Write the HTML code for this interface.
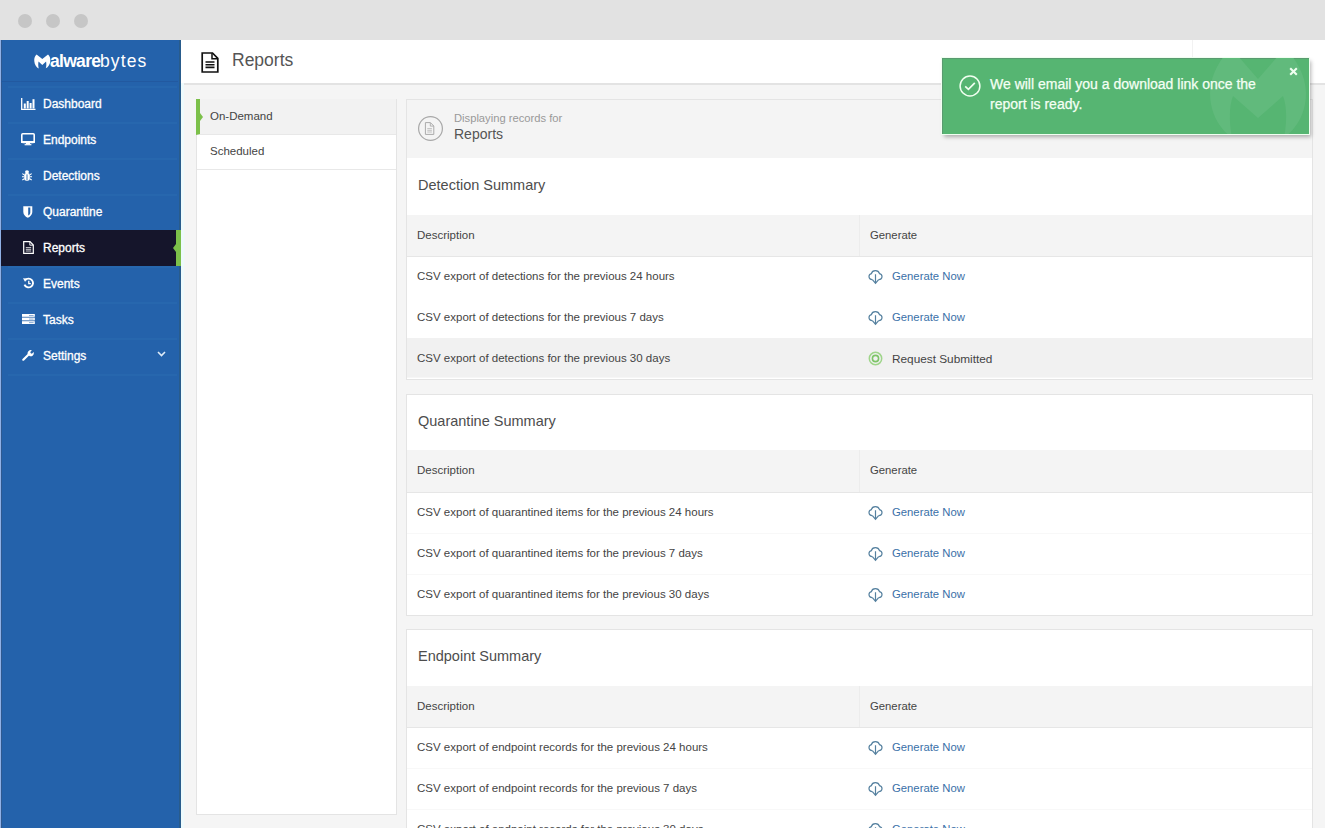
<!DOCTYPE html>
<html><head><meta charset="utf-8">
<style>
*{box-sizing:border-box;margin:0;padding:0}
html,body{width:1325px;height:828px;overflow:hidden;background:#f5f5f5;font-family:"Liberation Sans",sans-serif}
.titlebar{position:absolute;left:0;top:0;width:1325px;height:40px;background:#e2e2e2}
.dot{position:absolute;top:14px;width:14px;height:14px;border-radius:50%;background:#c6c6c6}
.sidebar{position:absolute;left:0;top:40px;width:181px;height:788px;background:#2462ab;border-left:1px solid #90b0e6;box-shadow:inset 1px 0 0 #30598f,inset -2px 0 0 #295c8c}
.logo{position:absolute;left:33px;top:11px;color:#fff;font-size:16px;height:20px;white-space:nowrap}
.mlogo{position:absolute;left:0;top:3px}
.lb{position:absolute;left:16px;top:0;font-weight:bold;font-size:17.5px;letter-spacing:-0.7px}
.lr{position:absolute;left:66px;top:0;font-size:17.5px;letter-spacing:1.1px}
.nav{position:absolute;left:0;top:0;width:180px;height:36px;color:#fff;font-size:12px}
.nav .sep{position:absolute;left:7px;right:4px;top:0;height:2px;background:#2767ae}
.nav .t{position:absolute;left:42px;top:11px;-webkit-text-stroke:0.3px #fff}
.nav .ic{position:absolute;line-height:0}
.nav.active{background:#15152b}
.nav.active::after{content:"";position:absolute;right:0;top:0;width:5px;height:36px;background:#7cc04a}
.nav.active::before{content:"";position:absolute;right:5px;top:14px;border-right:3px solid #7cc04a;border-top:4px solid transparent;border-bottom:4px solid transparent}
.chev{position:absolute;left:156px;top:13px}
.main{position:absolute;left:181px;top:40px;width:1144px;height:788px;background:#f5f5f5}
.hdr{position:absolute;left:0;top:0;width:1144px;height:45px;background:#fff;border-bottom:2px solid #e3e3e3}
.hdr .t{position:absolute;left:51px;top:10px;font-size:17.5px;color:#555}
.hic{position:absolute;left:20px;top:12px;line-height:0}
.hsep{position:absolute;left:1011px;top:0;width:1px;height:43px;background:#f2f2f2}
.subnav{position:absolute;left:196px;top:99px;width:201px;height:716px;background:#fff;border:1px solid #e4e4e4}
.sitem{position:absolute;left:0;width:199px;height:35px;font-size:11.5px;color:#444;border-bottom:1px solid #e8e8e8}
.sitem.act{background:#f2f2f2;border-left:4px solid #7cc04a;left:-1px;top:-1px !important;height:36px;width:200px}
.sitem.act::before{content:"";position:absolute;left:0;top:14px;border-left:3px solid #7cc04a;border-top:4px solid transparent;border-bottom:4px solid transparent}
.sitem .t{position:absolute;left:13px;top:10px}
.sitem.act .t{left:10px;top:11px}
.panel{position:absolute;left:406px;width:907px;background:#fff;border:1px solid #e4e4e4}
.phead{position:absolute;left:0;top:0;width:905px;height:58px;background:#f4f4f4}
.circ{position:absolute;left:11px;top:16px;line-height:0}
.dr{position:absolute;left:47px;top:12px;font-size:11.2px;color:#999}
.rp{position:absolute;left:47px;top:26px;font-size:14px;color:#555}
.ptitle{position:absolute;left:11px;font-size:14.5px;color:#4d4d4d}
.thead{position:absolute;left:0;width:905px;height:42px;background:#f4f4f4;border-bottom:1px solid #e6e6e6}
.hd{position:absolute;left:10px;top:14px;font-size:11.5px;color:#444}
.hg{position:absolute;left:463px;top:14px;font-size:11.3px;color:#444}
.vdiv{position:absolute;left:452px;top:0;width:1px;height:41px;background:#ececec}
.row{position:absolute;left:0;width:905px;height:41px;font-size:11.5px;color:#444}
.row.hov{background:#f1f1f1}
.row .d{position:absolute;left:10px;top:13px}
.row .g{position:absolute;left:485px;top:13px;color:#3a70a8;font-size:11.3px}
.row .g.sub{color:#444;font-size:11.8px}
.row .ic{position:absolute;left:461px;top:13px;line-height:0}
.toast{position:absolute;left:942px;top:58px;width:367px;height:76px;background:#56b572;box-shadow:inset 1px 1px 0 #5a9a70,0 0 0 1px #effff0,2px 3px 4px rgba(0,0,0,.3)}
.wm{position:absolute;left:0;top:0}
.chk{position:absolute;left:17px;top:17px}
.tt{position:absolute;left:48px;top:16px;font-size:14px;line-height:20px;color:#f4fff4;-webkit-text-stroke:0.25px #f4fff4}
.x{position:absolute;left:347px;top:9px}
.row.hov{height:40px;border-bottom:1px solid #f6f6f6}
.row.hov .d,.row.hov .g{top:14px}
.row.hov .ic{top:13px}
.nav.active .sep{display:none}
.lstrip{position:absolute;left:181px;top:83px;width:3px;height:745px;background:#eefafc}
.row.sepb{border-bottom:1px solid #f8f8f8}

</style></head><body>
<div class="titlebar">
  <div class="dot" style="left:18px"></div>
  <div class="dot" style="left:46px"></div>
  <div class="dot" style="left:74px"></div>
</div>
<div class="sidebar">
<div class="logo"><svg class="mlogo" width="17" height="15" viewBox="0 0 17 15"><path d="M2.6 0.6C0.9 1.8 0 4.3 0.3 7.2C0.6 10.6 2.4 13.2 4.8 14.6C4.2 12.6 4.1 10.2 4.5 7.6L8.3 11L12.1 7.6C12.5 10.2 12.4 12.6 11.8 14.2C14.2 13 16 10.6 16.3 7.2C16.6 4.3 15.7 1.8 14 0.6L8.3 5Z" fill="#fff"/></svg><span class="lb">alware</span><span class="lr">bytes</span></div>
<div style="position:absolute;left:0;top:41px;width:177px;height:1px;background:#2259a0"></div>
<div class="nav" style="top:46px"><div class="sep"></div><div class="ic" style="left:20px;top:12px"><svg width="15" height="12" viewBox="0 0 15 12"><path d="M0.7 0V11.3H14.5" fill="none" stroke="#fff" stroke-width="1.3"/><rect x="2.8" y="5.5" width="2" height="5" fill="#fff"/><rect x="5.7" y="3" width="2" height="7.5" fill="#fff"/><rect x="8.6" y="5" width="2" height="5.5" fill="#fff"/><rect x="11.5" y="1.2" width="2" height="9.3" fill="#fff"/></svg></div><div class="t">Dashboard</div></div>
<div class="nav" style="top:82px"><div class="sep"></div><div class="ic" style="left:20px;top:11px"><svg width="14" height="13" viewBox="0 0 14 13"><rect x="0.8" y="0.8" width="12.4" height="8.6" rx="1" fill="none" stroke="#fff" stroke-width="1.6"/><rect x="0" y="8" width="14" height="1.9" fill="#fff"/><rect x="5" y="9.8" width="4" height="1.4" fill="#fff"/><rect x="3.6" y="11.1" width="6.8" height="1.2" fill="#fff"/></svg></div><div class="t">Endpoints</div></div>
<div class="nav" style="top:118px"><div class="sep"></div><div class="ic" style="left:21px;top:11.5px"><svg width="10" height="11" viewBox="0 0 10 11"><ellipse cx="5" cy="1.8" rx="2" ry="1.5" fill="#fff"/><rect x="2.2" y="3.1" width="5.6" height="7.6" rx="2.2" fill="#fff"/><path d="M0.2 3.6L2.2 4.8M9.8 3.6L7.8 4.8M0 6.8H2.2M10 6.8H7.8M0.3 10L2.3 8.8M9.7 10L7.7 8.8" stroke="#fff" stroke-width="1.1"/><path d="M5 4.4v5.6" stroke="#2462ab" stroke-width="0.9"/></svg></div><div class="t">Detections</div></div>
<div class="nav" style="top:154px"><div class="sep"></div><div class="ic" style="left:21.5px;top:11.5px"><svg width="10" height="12" viewBox="0 0 10 12"><path d="M0.3 0.3H9.3V6C9.3 8.9 7 10.8 4.8 11.8C2.6 10.8 0.3 8.9 0.3 6Z" fill="#fff"/><path d="M5.2 1.6H7.3V6.4C7.3 7.6 6.6 8.6 5.2 9.6Z" fill="#2462ab"/></svg></div><div class="t">Quarantine</div></div>
<div class="nav active" style="top:190px"><div class="sep"></div><div class="ic" style="left:22px;top:11px"><svg width="11" height="13" viewBox="0 0 11 13"><path d="M0.7 0.7H7L10.3 4V12.3H0.7Z" fill="none" stroke="#fff" stroke-width="1.2"/><path d="M6.8 0.8V4.2H10.2" fill="none" stroke="#fff" stroke-width="0.9"/><path d="M2.8 6.6H8.2M2.8 8.3H8.2M2.8 10H8.2" stroke="#fff" stroke-width="0.8"/></svg></div><div class="t">Reports</div></div>
<div class="nav" style="top:226px"><div class="sep"></div><div class="ic" style="left:21.5px;top:11px"><svg width="11" height="12" viewBox="0 0 11 12"><path d="M2.1 3.3A4.4 4.4 0 1 1 1.5 7.6" fill="none" stroke="#fff" stroke-width="1.9"/><path d="M0 1.3L3.7 1.5L2.1 4.9Z" fill="#fff"/><path d="M5.8 3.8V6.6H7.8" fill="none" stroke="#fff" stroke-width="1.3"/></svg></div><div class="t">Events</div></div>
<div class="nav" style="top:262px"><div class="sep"></div><div class="ic" style="left:21px;top:11.5px"><svg width="13" height="11" viewBox="0 0 13 11"><rect x="0" y="0" width="12.8" height="2.8" fill="#fff"/><rect x="0" y="3.6" width="12.8" height="2.8" fill="#fff"/><rect x="0" y="7.2" width="12.8" height="2.8" fill="#fff"/><rect x="7" y="1" width="4.6" height="0.9" fill="#7fa3d0"/><rect x="7" y="4.6" width="4.6" height="0.9" fill="#7fa3d0"/><rect x="7" y="8.2" width="4.6" height="0.9" fill="#7fa3d0"/></svg></div><div class="t">Tasks</div></div>
<div class="nav" style="top:298px"><div class="sep"></div><div class="ic" style="left:21px;top:12px"><svg width="12" height="11" viewBox="0 0 12 11"><path d="M1.3 9.7L6.6 4.5" stroke="#fff" stroke-width="2.2" stroke-linecap="round"/><path d="M5.7 4.1A3.1 3.1 0 0 1 9.9 0.4L8.2 2.1L8.8 3.2L9.9 3.8L11.6 2.1A3.1 3.1 0 0 1 7.5 6Z" fill="#fff"/></svg></div><div class="t">Settings</div><svg class="chev" width="9" height="6" viewBox="0 0 9 6"><path d="M1 1L4.5 4.5L8 1" fill="none" stroke="#e0ecf8" stroke-width="1.6"/></svg></div>
<div class="nav" style="top:334px;height:2px"><div class="sep"></div></div>
</div>
<div class="main"><div class="hdr"><div class="hic"><svg width="18" height="21" viewBox="0 0 18 21"><path d="M1.2 1H11.5L16.8 6.3V20H1.2Z" fill="none" stroke="#111" stroke-width="1.7"/><path d="M11 1.2V6.8H16.6" fill="none" stroke="#111" stroke-width="1.5"/><path d="M4.5 10H13.5M4.5 12.7H13.5M4.5 15.4H13.5" stroke="#111" stroke-width="1.6"/></svg></div><div class="t">Reports</div><div class="hsep"></div></div></div>
<div class="lstrip"></div>
<div class="subnav">
  <div class="sitem act" style="top:0"><div class="t">On-Demand</div></div>
  <div class="sitem" style="top:35px"><div class="t">Scheduled</div></div>
</div>
<div class="panel" style="top:99px;height:281px"><div class="phead"><div class="circ"><svg width="26" height="26" viewBox="0 0 26 26"><circle cx="12.5" cy="12.5" r="11.9" fill="none" stroke="#a8a8a8" stroke-width="1.2"/><path d="M7.4 6.6H12.4L15.8 10V18.4H7.4Z" fill="none" stroke="#aaa" stroke-width="1"/><path d="M12.3 6.7V10.1H15.7" fill="none" stroke="#aaa" stroke-width="0.9"/><path d="M9.3 12.6H13.9M9.3 14.3H13.9M9.3 16H13.9" stroke="#bbb" stroke-width="0.9"/></svg></div><div class="dr">Displaying records for</div><div class="rp">Reports</div></div><div class="ptitle" style="top:77px">Detection Summary</div><div class="thead" style="top:115px"><div class="hd">Description</div><div class="vdiv"></div><div class="hg">Generate</div></div><div class="row" style="top:157px"><div class="d">CSV export of detections for the previous 24 hours</div><div class="ic"><svg width="15" height="15" viewBox="0 0 15 15"><path d="M4.4 9.6C2.5 9.6 1 8.3 1 6.6C1 5.1 2 4 3.4 3.7C3.8 1.9 5.5 0.7 7.4 0.7C9.3 0.7 11 1.9 11.5 3.7C12.9 4 14 5.1 14 6.6C14 8.3 12.5 9.6 10.6 9.6" fill="none" stroke="#55809f" stroke-width="1.2"/><path d="M4.4 9.6L7.5 13.4L10.6 9.6M7.5 4.2V13.2" fill="none" stroke="#55809f" stroke-width="1.2"/></svg></div><div class="g">Generate Now</div></div><div class="row" style="top:198px"><div class="d">CSV export of detections for the previous 7 days</div><div class="ic"><svg width="15" height="15" viewBox="0 0 15 15"><path d="M4.4 9.6C2.5 9.6 1 8.3 1 6.6C1 5.1 2 4 3.4 3.7C3.8 1.9 5.5 0.7 7.4 0.7C9.3 0.7 11 1.9 11.5 3.7C12.9 4 14 5.1 14 6.6C14 8.3 12.5 9.6 10.6 9.6" fill="none" stroke="#55809f" stroke-width="1.2"/><path d="M4.4 9.6L7.5 13.4L10.6 9.6M7.5 4.2V13.2" fill="none" stroke="#55809f" stroke-width="1.2"/></svg></div><div class="g">Generate Now</div></div><div class="row hov" style="top:238px"><div class="d">CSV export of detections for the previous 30 days</div><div class="ic"><svg width="15" height="15" viewBox="0 0 15 15"><circle cx="7.5" cy="7.5" r="6.2" fill="none" stroke="#9fd58a" stroke-width="1.5"/><circle cx="7.5" cy="7.5" r="3.1" fill="none" stroke="#7cc466" stroke-width="1.6"/></svg></div><div class="g sub">Request Submitted</div></div></div>
<div class="panel" style="top:394px;height:222px"><div class="ptitle" style="top:18px">Quarantine Summary</div><div class="thead" style="top:55px;height:43px"><div class="hd">Description</div><div class="vdiv" style="height:42px"></div><div class="hg">Generate</div></div><div class="row sepb" style="top:98px"><div class="d">CSV export of quarantined items for the previous 24 hours</div><div class="ic"><svg width="15" height="15" viewBox="0 0 15 15"><path d="M4.4 9.6C2.5 9.6 1 8.3 1 6.6C1 5.1 2 4 3.4 3.7C3.8 1.9 5.5 0.7 7.4 0.7C9.3 0.7 11 1.9 11.5 3.7C12.9 4 14 5.1 14 6.6C14 8.3 12.5 9.6 10.6 9.6" fill="none" stroke="#55809f" stroke-width="1.2"/><path d="M4.4 9.6L7.5 13.4L10.6 9.6M7.5 4.2V13.2" fill="none" stroke="#55809f" stroke-width="1.2"/></svg></div><div class="g">Generate Now</div></div><div class="row sepb" style="top:139px"><div class="d">CSV export of quarantined items for the previous 7 days</div><div class="ic"><svg width="15" height="15" viewBox="0 0 15 15"><path d="M4.4 9.6C2.5 9.6 1 8.3 1 6.6C1 5.1 2 4 3.4 3.7C3.8 1.9 5.5 0.7 7.4 0.7C9.3 0.7 11 1.9 11.5 3.7C12.9 4 14 5.1 14 6.6C14 8.3 12.5 9.6 10.6 9.6" fill="none" stroke="#55809f" stroke-width="1.2"/><path d="M4.4 9.6L7.5 13.4L10.6 9.6M7.5 4.2V13.2" fill="none" stroke="#55809f" stroke-width="1.2"/></svg></div><div class="g">Generate Now</div></div><div class="row" style="top:180px"><div class="d">CSV export of quarantined items for the previous 30 days</div><div class="ic"><svg width="15" height="15" viewBox="0 0 15 15"><path d="M4.4 9.6C2.5 9.6 1 8.3 1 6.6C1 5.1 2 4 3.4 3.7C3.8 1.9 5.5 0.7 7.4 0.7C9.3 0.7 11 1.9 11.5 3.7C12.9 4 14 5.1 14 6.6C14 8.3 12.5 9.6 10.6 9.6" fill="none" stroke="#55809f" stroke-width="1.2"/><path d="M4.4 9.6L7.5 13.4L10.6 9.6M7.5 4.2V13.2" fill="none" stroke="#55809f" stroke-width="1.2"/></svg></div><div class="g">Generate Now</div></div></div>
<div class="panel" style="top:629px;height:222px"><div class="ptitle" style="top:18px">Endpoint Summary</div><div class="thead" style="top:56px;height:42px"><div class="hd">Description</div><div class="vdiv" style="height:41px"></div><div class="hg">Generate</div></div><div class="row sepb" style="top:98px"><div class="d">CSV export of endpoint records for the previous 24 hours</div><div class="ic"><svg width="15" height="15" viewBox="0 0 15 15"><path d="M4.4 9.6C2.5 9.6 1 8.3 1 6.6C1 5.1 2 4 3.4 3.7C3.8 1.9 5.5 0.7 7.4 0.7C9.3 0.7 11 1.9 11.5 3.7C12.9 4 14 5.1 14 6.6C14 8.3 12.5 9.6 10.6 9.6" fill="none" stroke="#55809f" stroke-width="1.2"/><path d="M4.4 9.6L7.5 13.4L10.6 9.6M7.5 4.2V13.2" fill="none" stroke="#55809f" stroke-width="1.2"/></svg></div><div class="g">Generate Now</div></div><div class="row sepb" style="top:139px"><div class="d">CSV export of endpoint records for the previous 7 days</div><div class="ic"><svg width="15" height="15" viewBox="0 0 15 15"><path d="M4.4 9.6C2.5 9.6 1 8.3 1 6.6C1 5.1 2 4 3.4 3.7C3.8 1.9 5.5 0.7 7.4 0.7C9.3 0.7 11 1.9 11.5 3.7C12.9 4 14 5.1 14 6.6C14 8.3 12.5 9.6 10.6 9.6" fill="none" stroke="#55809f" stroke-width="1.2"/><path d="M4.4 9.6L7.5 13.4L10.6 9.6M7.5 4.2V13.2" fill="none" stroke="#55809f" stroke-width="1.2"/></svg></div><div class="g">Generate Now</div></div><div class="row" style="top:180px"><div class="d">CSV export of endpoint records for the previous 30 days</div><div class="ic"><svg width="15" height="15" viewBox="0 0 15 15"><path d="M4.4 9.6C2.5 9.6 1 8.3 1 6.6C1 5.1 2 4 3.4 3.7C3.8 1.9 5.5 0.7 7.4 0.7C9.3 0.7 11 1.9 11.5 3.7C12.9 4 14 5.1 14 6.6C14 8.3 12.5 9.6 10.6 9.6" fill="none" stroke="#55809f" stroke-width="1.2"/><path d="M4.4 9.6L7.5 13.4L10.6 9.6M7.5 4.2V13.2" fill="none" stroke="#55809f" stroke-width="1.2"/></svg></div><div class="g">Generate Now</div></div></div>

<div class="toast"><svg class="wm" width="367" height="76" viewBox="0 0 367 76"><path d="M282 -2C270 14 266 30 269 46C272 62 280 72 290 80L342 80C352 72 360 62 363 46C366 30 362 14 350 -2L336 -2L316 21L296 -2Z" fill="#61ba7c"/><path d="M290 80C287 64 287 48 291 38L316 60L341 38C345 48 345 64 342 80Z" fill="#56b572"/></svg><svg class="chk" width="22" height="22" viewBox="0 0 22 22"><circle cx="11" cy="11" r="9.9" fill="none" stroke="#f0fff0" stroke-width="1.5"/><path d="M6.2 11.3L9.4 14.4L15.8 7.8" fill="none" stroke="#f0fff0" stroke-width="1.7"/></svg><div class="tt">We will email you a download link once the<br>report is ready.</div><svg class="x" width="9" height="9" viewBox="0 0 9 9"><path d="M1.2 1.2L7.8 7.8M7.8 1.2L1.2 7.8" stroke="#effff0" stroke-width="2.1"/></svg></div>
</body></html>
